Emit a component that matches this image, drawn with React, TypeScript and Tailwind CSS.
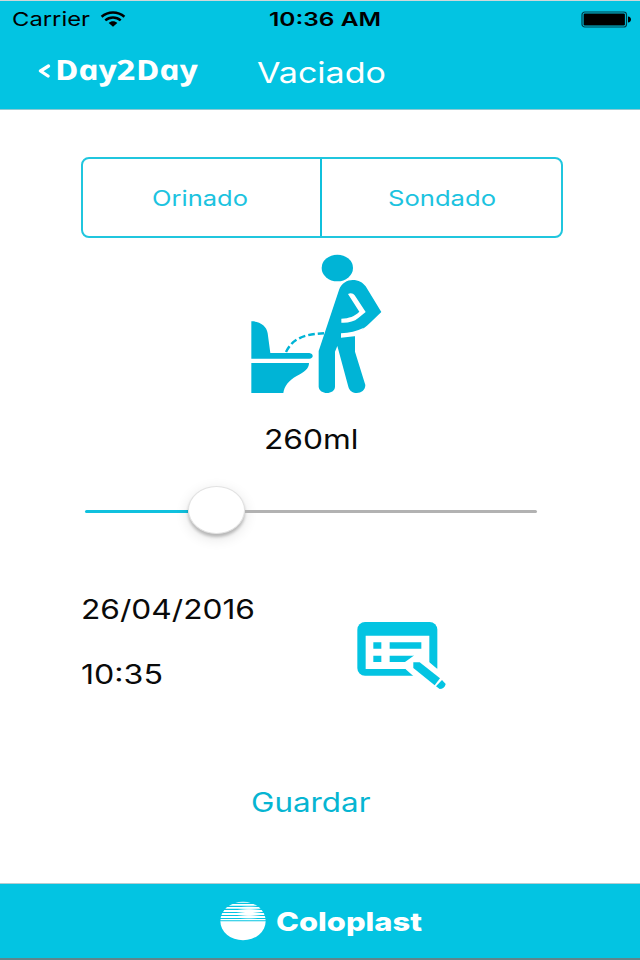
import { useLayoutEffect, useRef, useState } from "react";
import type { ReactNode } from "react";

// Single line of text stretched horizontally to an exact width.
function FitText({ width, className = "", children }: { width: number; className?: string; children: ReactNode }) {
  const ref = useRef<HTMLSpanElement>(null);
  const [scale, setScale] = useState(1);
  useLayoutEffect(() => {
    if (ref.current) setScale(width / ref.current.getBoundingClientRect().width * scale);
  }, [width]);
  return (
    <span className="flex shrink-0 justify-start" style={{ width }}>
      <span
        ref={ref}
        className={`inline-block shrink-0 origin-left whitespace-nowrap ${className}`}
        style={{ transform: `scaleX(${scale})` }}
      >
        {children}
      </span>
    </span>
  );
}

function StatusBar() {
  return (
    <div className="flex h-9 items-center pl-3 pt-px text-[19px] leading-9 text-black">
      <FitText width={78}>Carrier</FitText>
      <svg className="ml-[10px] mt-[-1px] h-[17px] w-[26px] shrink-0" viewBox="0 0 26 17" fill="none" stroke="#000" strokeWidth="2.5">
        <path d="M1.6 5.8C8 .2 18 .2 24.4 5.8" />
        <path d="M5.3 9.4C9.7 5.6 16.3 5.6 20.7 9.4" />
        <path d="M8.7 12C11 9.7 15 9.7 17.3 12L13 15.8Z" fill="#000" stroke="none" />
      </svg>
      <div className="ml-[143px]">
        <FitText width={112} className="font-semibold">10:36 AM</FitText>
      </div>
      <svg className="ml-auto mr-[8px] mt-[-1px] h-[17px] w-[51px] shrink-0" viewBox="0 0 51 17">
        <rect x="1" y="1" width="44.5" height="15" rx="2.8" fill="none" stroke="#003c46" strokeWidth="1.2" />
        <rect x="2.6" y="2.6" width="41.3" height="11.8" rx="1.2" />
        <path d="M47 5.5c4 .3 4 5.700 0 6Z" />
      </svg>
    </div>
  );
}

function Header() {
  return (
    <header className="h-[110px] border-y border-t-[#cfd8da] border-b-[#8fc9d2] bg-[#03c4e2]">
      <StatusBar />
      <div className="flex h-[70px] items-center text-white">
        <svg className="ml-[38px] mt-[-2px] h-[14px] w-[13px] shrink-0" viewBox="0 0 13 14" fill="none" stroke="#fff" strokeWidth="3.300" strokeLinecap="round" strokeLinejoin="round">
          <path d="M10.500 2L2.500 7L10 12" />
        </svg>
        <div className="ml-[3px] mt-[-7px]">
          <FitText
            width={143}
            className="font-['Open_Sans','Noto_Sans',sans-serif] text-[28px] font-bold italic leading-[40px]"
          >
            <span className="inline-block skew-x-[12deg]">Day2Day</span>
          </FitText>
        </div>
        <div className="ml-[60px] mt-px">
          <FitText width={129} className="text-[29px] leading-[39px]">Vaciado</FitText>
        </div>
      </div>
    </header>
  );
}

function PersonIcon() {
  return (
    <svg className="h-[160px] w-[150px]" viewBox="0 0 450 480" fill="#00b4d6">
      <ellipse cx="292" cy="69" rx="47" ry="40" />
      <path d="M297 135C304 114 322 105 338 105C356 105 368 112 377 124L424 201L396 228C374 250 360 258 345 266L345 320L376 420C376 449 332 453 325 425L292 303L285 320V425C284 450 238 450 236 425V318Z" />
      <path fill="#fff" d="M324 147C332 143 340 145 344 151L377 201L355 219C342 230 325 234 304 233V221C328 220 343 214 358 200Z" />
      <path fill="#fff" d="M303 265C328 264 350 258 372 248L350 273L303 278Z" />
      <path d="M34 229C60 229 80 243 83 265L91 324H208C222 326 221 340 208 341H34Z" />
      <path d="M34 354H207C207 371 194 380 170 393C145 407 133 425 130 444H34Z" />
      <path d="M138 321C155 287 182 267 252 265" fill="none" stroke="#00b4d6" strokeWidth="7.500" strokeDasharray="20 9" />
    </svg>
  );
}

function FormIcon() {
  return (
    <svg className="h-[90px] w-[120px]" viewBox="0 0 360 270" fill="#03c4e2">
      <rect x="52" y="36" width="240" height="161" rx="23" />
      <path fill="#fff" d="M77 77H268V177H77Z" />
      <path d="M100 97H124V116H100ZM100 137H124V156H100ZM149 97H244V116H149ZM149 137H222V156H149Z" />
      <path fill="#fff" d="M195 156L220 138L246 140L268 157L293 178V210L240 215L219 197L197 178L205 167Z" />
      <path d="M220 157H239L300 205L284 226L220 174Z" />
      <path d="M306 210L317 222C315 232 308 237 299 237L288 229Z" />
    </svg>
  );
}

function Globe() {
  return (
    <svg className="h-[40px] w-[46px]" viewBox="0 0 138 120">
      <defs>
        <clipPath id="globe"><ellipse cx="69" cy="60" rx="68" ry="58" /></clipPath>
        <radialGradient id="glow">
          <stop offset="0.300" stopColor="#fff" />
          <stop offset="1" stopColor="#fff" stopOpacity="0" />
        </radialGradient>
      </defs>
      <g clipPath="url(#globe)" fill="#fff">
        <path d="M0 0H138V5H0ZM0 9H138V14H0ZM0 18H138V23.500H0ZM0 27H138V33H0ZM0 36H138V42H0ZM0 45H138V51H0ZM0 54H138V58H0ZM0 61H138V120H0Z" />
        <ellipse cx="87" cy="35" rx="38" ry="24" fill="url(#glow)" />
      </g>
    </svg>
  );
}

export default function App() {
  return (
    <div className="flex h-[960px] w-[640px] flex-col overflow-hidden bg-white font-['Inter','Liberation_Sans',sans-serif] text-[#0a0a0a]">
      <Header />
      <main className="flex flex-1 flex-col">
        <div className="ml-[81px] mt-[47px] flex h-[81px] w-[482px] rounded-[8px] border-2 border-[#20c6de] text-[21px] leading-[30px] text-[#1cc3df]">
          <button className="flex w-[239px] items-center border-r-2 border-[#10c0dc] pl-[69px] pt-[3px]">
            <FitText width={96}>Orinado</FitText>
          </button>
          <button className="flex flex-1 items-center pl-[66px] pt-[3px]">
            <FitText width={108}>Sondado</FitText>
          </button>
        </div>

        <div className="ml-[240px] mt-[7px] h-[160px]">
          <PersonIcon />
        </div>

        <div className="ml-[263.5px] mt-[14px] h-[40px]">
          <FitText width={94.5} className="text-[26.5px] leading-[40px]">260ml</FitText>
        </div>

        <div className="mt-[26px] flex h-[50px] items-center pl-[85px]">
          <div className="mt-[3px] h-[3px] w-[103px] rounded-l bg-[#10c1de]" />
          <div className="h-[48px] w-[57px] shrink-0 rounded-[50%] border border-[#e2e2e2] bg-white shadow-[0_3px_3px_rgba(0,0,0,0.22),0_4px_14px_rgba(0,0,0,0.12)]" />
          <div className="mt-[3px] h-[3px] w-[292px] rounded-r bg-[#b2b2b2]" />
        </div>

        <div className="mt-[54px] flex h-[111px]">
          <div className="ml-[81px] flex w-[259px] flex-col gap-[25px] text-[26.5px] leading-[40px]">
            <FitText width={174}>26/04/2016</FitText>
            <FitText width={82}>10:35</FitText>
          </div>
          <div className="mt-[21px]">
            <FormIcon />
          </div>
        </div>

        <button className="ml-[251px] mt-[82px] flex h-[40px] text-[#06b5d2]">
          <FitText width={119.500} className="text-[26.5px] leading-[40px]">Guardar</FitText>
        </button>
      </main>
      <footer className="flex h-[77px] items-center border-b-2 border-t border-b-[#5f858b] border-t-[#b5ccd0] bg-[#03c4e2] pl-[220px] text-white">
        <Globe />
        <div className="ml-[10px] mt-[2px]">
          <FitText width={146} className="text-[26px] font-extrabold leading-[40px]">Coloplast</FitText>
        </div>
      </footer>
    </div>
  );
}
